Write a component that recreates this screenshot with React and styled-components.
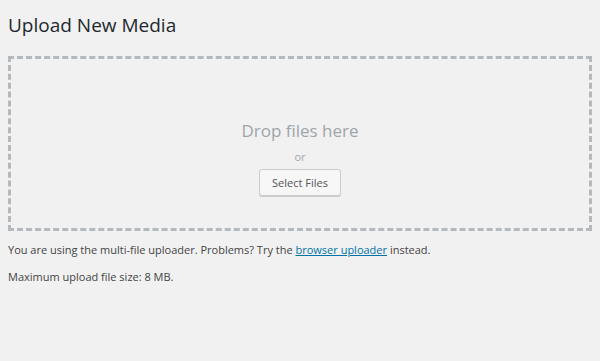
import React from 'react';
import styled, { createGlobalStyle } from 'styled-components';

const GlobalStyle = createGlobalStyle`
  html, body {
    margin: 0;
    padding: 0;
    background: #f1f1f1;
  }
  body {
    font-family: "Open Sans", "Liberation Sans", sans-serif;
    font-size: 11px;
    color: #444;
  }
`;

const Page = styled.div`
  padding: 13px 8px 0;
  height: 361px;
  box-sizing: border-box;
`;

const Title = styled.h1`
  margin: 0;
  font-size: 19px;
  line-height: 24px;
  font-weight: 400;
  color: #23282d;
`;

const DropArea = styled.div`
  margin-top: 19px;
  height: 175px;
  box-sizing: border-box;
  padding-top: 60px;
  border: 3px dashed #b4b9be;
  display: flex;
  flex-direction: column;
  align-items: center;
`;

const DropText = styled.p`
  margin: 0;
  font-size: 17px;
  line-height: 24px;
  color: #a0a5aa;
`;

const OrText = styled.p`
  margin: 6px 0 4px;
  font-size: 11px;
  line-height: 16px;
  color: #a0a5aa;
`;

const Button = styled.button`
  height: 27px;
  padding: 0 12px 1px;
  font-family: inherit;
  font-size: 11px;
  line-height: 25px;
  color: #555;
  background: #f7f7f7;
  border: 1px solid #ccc;
  border-radius: 3px;
  box-shadow: 0 1px 0 #ccc;
  cursor: pointer;
`;

const Note = styled.p`
  margin: ${({ $first }) => ($first ? '11px' : '11px')} 0 0;
  font-size: 11px;
  line-height: 16px;
  color: #444;
`;

const Link = styled.a`
  color: #0073aa;
  text-decoration: underline;
`;

const App = () => (
  <Page>
    <GlobalStyle />
    <Title>Upload New Media</Title>

    <DropArea>
      <DropText>Drop files here</DropText>
      <OrText>or</OrText>
      <Button type="button">Select Files</Button>
    </DropArea>

    <Note $first>
      You are using the multi-file uploader. Problems? Try the{' '}
      <Link href="#">browser uploader</Link> instead.
    </Note>
    <Note>Maximum upload file size: 8 MB.</Note>
  </Page>
);

export default App;
